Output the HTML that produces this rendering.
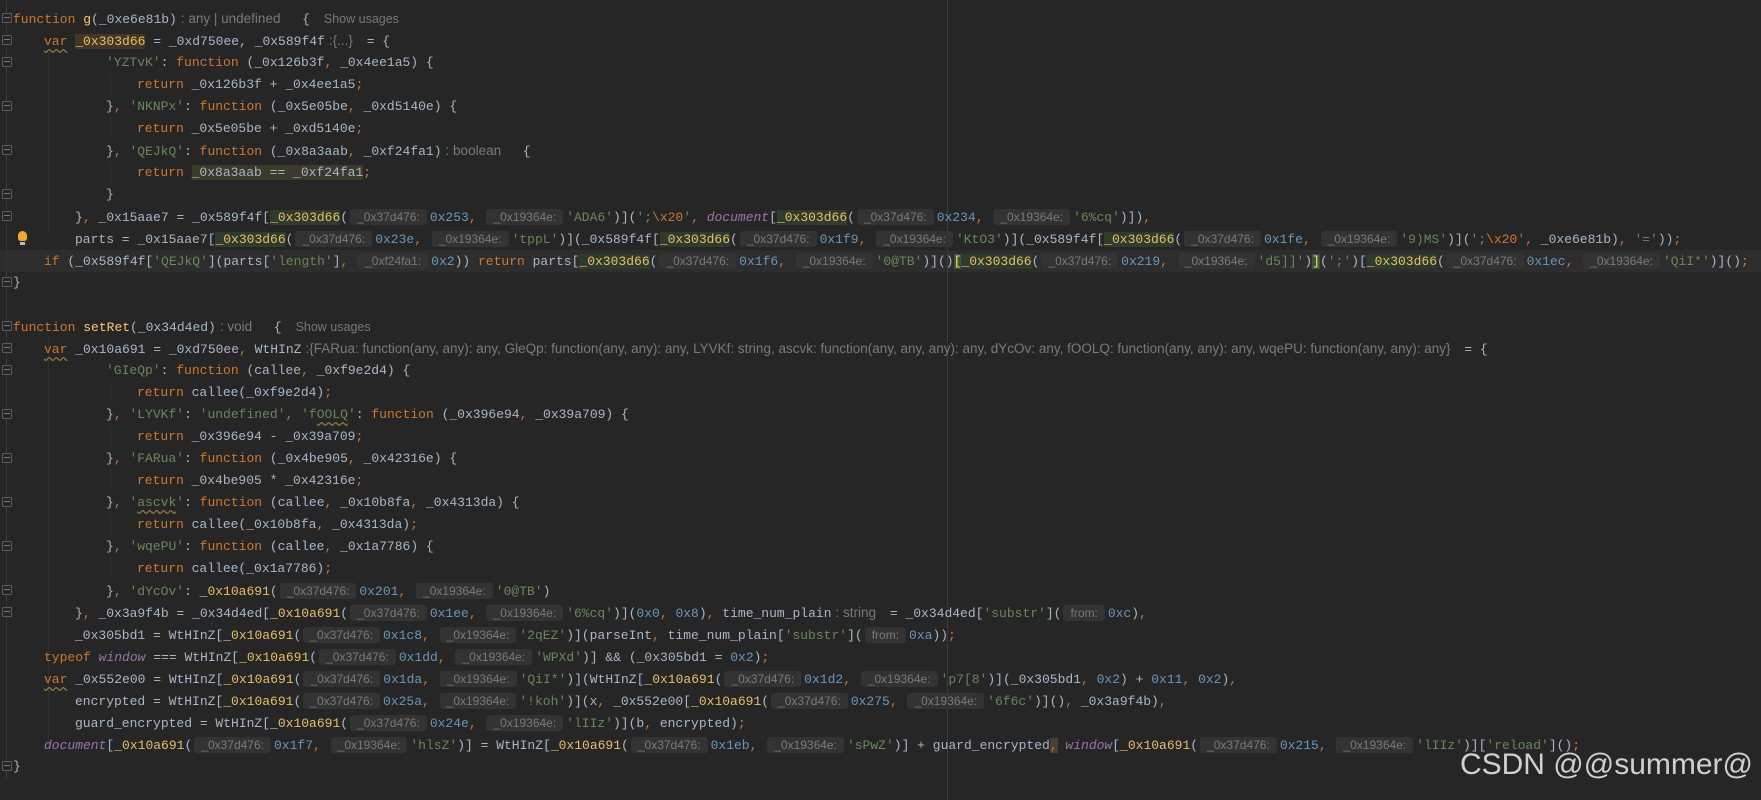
<!DOCTYPE html>
<html><head><meta charset="utf-8">
<style>
html,body{margin:0;padding:0;}
body{width:1761px;height:800px;background:#262626;position:relative;overflow:hidden;font-family:"Liberation Mono",monospace;font-size:13px;color:#a9b7c6;}
.l{position:absolute;left:0;height:22px;line-height:22px;white-space:pre;}
.k{color:#cc7832}
.fn{color:#ffc66d}
.s{color:#6a8759}
.n{color:#6897bb}
.e{color:#cc7832}
.p{color:#9876aa;font-style:italic}
.c{color:#e8bf6a}
.u{color:#e8bf6a;background:#2f3b2c}
.w{color:#e8bf6a;background:#443625}
.h{font-family:"Liberation Sans",sans-serif;font-size:12px;color:#7a7a7a;background:#333333;border-radius:3px;padding:1px 7px;margin:0 3px 0 2px;}
.t{font-family:"Liberation Sans",sans-serif;font-size:13.5px;color:#7a7a7a;margin:0 6px 0 4px;}
.su{font-family:"Liberation Sans",sans-serif;font-size:12.5px;color:#787878;margin-left:14px;}
.hl{background:#3b3a2b}
.wv{text-decoration:underline wavy #8a7a40;text-underline-offset:3px}
.cur{position:absolute;left:0;width:1761px;height:22px;background:#2d2d2d;}
.mg{position:absolute;left:947px;top:0;width:1px;height:800px;background:#3c3c3c;}
.gut{position:absolute;left:6px;top:0;width:1px;height:780px;background:#353535;}
.fold{position:absolute;left:2px;width:8px;height:8px;border:1px solid #5a5a5a;border-radius:1px;background:#262626;}
.fold:after{content:"";position:absolute;left:1px;top:3px;width:6px;height:1px;background:#777;}
.ig{position:absolute;width:1px;background:#303030;}
.wm{position:absolute;right:8px;top:748px;font-family:"Liberation Sans",sans-serif;font-size:30px;color:#d0d0d0;}
.bulb{position:absolute;left:18px;top:231px;width:9px;height:10px;border-radius:5px 5px 3px 3px;background:#f0a732;}
.bulb:after{content:"";position:absolute;left:2px;top:11px;width:5px;height:3px;background:#bbb;}
</style></head><body>
<div class="cur" style="top:250px"></div>
<div class="mg"></div>
<div class="gut"></div>
<div class="ig" style="left:48px;top:52px;height:180px"></div>
<div class="ig" style="left:110px;top:74px;height:22px"></div>
<div class="ig" style="left:110px;top:118px;height:22px"></div>
<div class="ig" style="left:110px;top:162px;height:22px"></div>
<div class="ig" style="left:48px;top:338px;height:410px"></div>
<div class="ig" style="left:110px;top:382px;height:22px"></div>
<div class="ig" style="left:110px;top:426px;height:22px"></div>
<div class="ig" style="left:110px;top:470px;height:22px"></div>
<div class="ig" style="left:110px;top:514px;height:22px"></div>
<div class="ig" style="left:110px;top:558px;height:22px"></div>
<div class="fold" style="top:13px"></div>
<div class="fold" style="top:35px"></div>
<div class="fold" style="top:57px"></div>
<div class="fold" style="top:101px"></div>
<div class="fold" style="top:145px"></div>
<div class="fold" style="top:189px"></div>
<div class="fold" style="top:211px"></div>
<div class="fold" style="top:277px"></div>
<div class="fold" style="top:321px"></div>
<div class="fold" style="top:343px"></div>
<div class="fold" style="top:365px"></div>
<div class="fold" style="top:409px"></div>
<div class="fold" style="top:453px"></div>
<div class="fold" style="top:497px"></div>
<div class="fold" style="top:541px"></div>
<div class="fold" style="top:585px"></div>
<div class="fold" style="top:607px"></div>
<div class="fold" style="top:761px"></div>
<div class="bulb"></div>

<div class="l" style="top:8px;left:13px"><span class="k">function</span> <span class="fn">g</span>(_0xe6e81b)<span class="t">: any | undefined</span>  {<span class="su">Show usages</span></div>
<div class="l" style="top:30px;left:44px"><span class="k wv">var</span> <span class="w">_0x303d66</span> = _0xd750ee, _0x589f4f<span class="t">:{...}</span> = {</div>
<div class="l" style="top:52px;left:106px"><span class="s">'YZTvK'</span>: <span class="k">function</span> (_0x126b3f<span class="k">,</span> _0x4ee1a5) {</div>
<div class="l" style="top:74px;left:137px"><span class="k">return</span> _0x126b3f + _0x4ee1a5<span class="k">;</span></div>
<div class="l" style="top:96px;left:106px">}<span class="k">,</span> <span class="s">'NKNPx'</span>: <span class="k">function</span> (_0x5e05be<span class="k">,</span> _0xd5140e) {</div>
<div class="l" style="top:118px;left:137px"><span class="k">return</span> _0x5e05be + _0xd5140e<span class="k">;</span></div>
<div class="l" style="top:140px;left:106px">}<span class="k">,</span> <span class="s">'QEJkQ'</span>: <span class="k">function</span> (_0x8a3aab<span class="k">,</span> _0xf24fa1)<span class="t">: boolean</span>  {</div>
<div class="l" style="top:162px;left:137px"><span class="k">return</span> <span class="hl">_0x8a3aab == _0xf24fa1</span><span class="k">;</span></div>
<div class="l" style="top:184px;left:106px">}</div>
<div class="l" style="top:206px;left:75px">}<span class="k">,</span> _0x15aae7 = _0x589f4f[<span class="u">_0x303d66</span>(<span class="h">_0x37d476:</span><span class="n">0x253</span><span class="k">,</span> <span class="h">_0x19364e:</span><span class="s">'ADA6'</span>)](<span class="s">';</span><span class="e">\x20</span><span class="s">'</span><span class="k">,</span> <span class="p">document</span>[<span class="u">_0x303d66</span>(<span class="h">_0x37d476:</span><span class="n">0x234</span><span class="k">,</span> <span class="h">_0x19364e:</span><span class="s">'6%cq'</span>)])<span class="k">,</span></div>
<div class="l" style="top:228px;left:75px">parts = _0x15aae7[<span class="u">_0x303d66</span>(<span class="h">_0x37d476:</span><span class="n">0x23e</span><span class="k">,</span> <span class="h">_0x19364e:</span><span class="s">'tppL'</span>)](_0x589f4f[<span class="u">_0x303d66</span>(<span class="h">_0x37d476:</span><span class="n">0x1f9</span><span class="k">,</span> <span class="h">_0x19364e:</span><span class="s">'KtO3'</span>)](_0x589f4f[<span class="u">_0x303d66</span>(<span class="h">_0x37d476:</span><span class="n">0x1fe</span><span class="k">,</span> <span class="h">_0x19364e:</span><span class="s">'9)MS'</span>)](<span class="s">';</span><span class="e">\x20</span><span class="s">'</span><span class="k">,</span> _0xe6e81b)<span class="k">,</span> <span class="s">'='</span>))<span class="k">;</span></div>
<div class="l" style="top:250px;left:44px"><span class="k">if</span> (_0x589f4f[<span class="s">'QEJkQ'</span>](parts[<span class="s">'length'</span>]<span class="k">,</span> <span class="h">_0xf24fa1:</span><span class="n">0x2</span>)) <span class="k">return</span> parts[<span class="u">_0x303d66</span>(<span class="h">_0x37d476:</span><span class="n">0x1f6</span><span class="k">,</span> <span class="h">_0x19364e:</span><span class="s">'0@TB'</span>)]()<span style="background:#3b514d;color:#ffef28">[</span><span class="u">_0x303d66</span>(<span class="h">_0x37d476:</span><span class="n">0x219</span><span class="k">,</span> <span class="h">_0x19364e:</span><span class="s">'d5]]'</span>)<span style="background:#3b514d;color:#ffef28">]</span>(<span class="s">';'</span>)[<span class="u">_0x303d66</span>(<span class="h">_0x37d476:</span><span class="n">0x1ec</span><span class="k">,</span> <span class="h">_0x19364e:</span><span class="s">'QiI*'</span>)]()<span class="k">;</span></div>
<div class="l" style="top:272px;left:13px">}</div>

<div class="l" style="top:316px;left:13px"><span class="k">function</span> <span class="fn">setRet</span>(_0x34d4ed)<span class="t">: void</span>  {<span class="su">Show usages</span></div>
<div class="l" style="top:338px;left:44px"><span class="k wv">var</span> _0x10a691 = _0xd750ee<span class="k">,</span> WtHInZ<span class="t">:{FARua: function(any, any): any, GleQp: function(any, any): any, LYVKf: string, ascvk: function(any, any, any): any, dYcOv: any, fOOLQ: function(any, any): any, wqePU: function(any, any): any}</span> = {</div>
<div class="l" style="top:360px;left:106px"><span class="s">'GIeQp'</span>: <span class="k">function</span> (callee<span class="k">,</span> _0xf9e2d4) {</div>
<div class="l" style="top:382px;left:137px"><span class="k">return</span> callee(_0xf9e2d4)<span class="k">;</span></div>
<div class="l" style="top:404px;left:106px">}<span class="k">,</span> <span class="s">'LYVKf'</span>: <span class="s">'undefined'</span><span class="k">,</span> <span class="s">'f<span class="wv">OOLQ</span>'</span>: <span class="k">function</span> (_0x396e94<span class="k">,</span> _0x39a709) {</div>
<div class="l" style="top:426px;left:137px"><span class="k">return</span> _0x396e94 - _0x39a709<span class="k">;</span></div>
<div class="l" style="top:448px;left:106px">}<span class="k">,</span> <span class="s">'FARua'</span>: <span class="k">function</span> (_0x4be905<span class="k">,</span> _0x42316e) {</div>
<div class="l" style="top:470px;left:137px"><span class="k">return</span> _0x4be905 * _0x42316e<span class="k">;</span></div>
<div class="l" style="top:492px;left:106px">}<span class="k">,</span> <span class="s">'<span class="wv">ascvk</span>'</span>: <span class="k">function</span> (callee<span class="k">,</span> _0x10b8fa<span class="k">,</span> _0x4313da) {</div>
<div class="l" style="top:514px;left:137px"><span class="k">return</span> callee(_0x10b8fa<span class="k">,</span> _0x4313da)<span class="k">;</span></div>
<div class="l" style="top:536px;left:106px">}<span class="k">,</span> <span class="s">'wqePU'</span>: <span class="k">function</span> (callee<span class="k">,</span> _0x1a7786) {</div>
<div class="l" style="top:558px;left:137px"><span class="k">return</span> callee(_0x1a7786)<span class="k">;</span></div>
<div class="l" style="top:580px;left:106px">}<span class="k">,</span> <span class="s">'dYcOv'</span>: <span class="c">_0x10a691</span>(<span class="h">_0x37d476:</span><span class="n">0x201</span><span class="k">,</span> <span class="h">_0x19364e:</span><span class="s">'0@TB'</span>)</div>
<div class="l" style="top:602px;left:75px">}<span class="k">,</span> _0x3a9f4b = _0x34d4ed[<span class="c">_0x10a691</span>(<span class="h">_0x37d476:</span><span class="n">0x1ee</span><span class="k">,</span> <span class="h">_0x19364e:</span><span class="s">'6%cq'</span>)](<span class="n">0x0</span><span class="k">,</span> <span class="n">0x8</span>)<span class="k">,</span> time_num_plain<span class="t">: string</span> = _0x34d4ed[<span class="s">'substr'</span>](<span class="h">from:</span><span class="n">0xc</span>)<span class="k">,</span></div>
<div class="l" style="top:624px;left:75px">_0x305bd1 = WtHInZ[<span class="c">_0x10a691</span>(<span class="h">_0x37d476:</span><span class="n">0x1c8</span><span class="k">,</span> <span class="h">_0x19364e:</span><span class="s">'2qEZ'</span>)](parseInt<span class="k">,</span> time_num_plain[<span class="s">'substr'</span>](<span class="h">from:</span><span class="n">0xa</span>))<span class="k">;</span></div>
<div class="l" style="top:646px;left:44px"><span class="k">typeof</span> <span class="p">window</span> === WtHInZ[<span class="c">_0x10a691</span>(<span class="h">_0x37d476:</span><span class="n">0x1dd</span><span class="k">,</span> <span class="h">_0x19364e:</span><span class="s">'WPXd'</span>)] &amp;&amp; (_0x305bd1 = <span class="n">0x2</span>)<span class="k">;</span></div>
<div class="l" style="top:668px;left:44px"><span class="k wv">var</span> _0x552e00 = WtHInZ[<span class="c">_0x10a691</span>(<span class="h">_0x37d476:</span><span class="n">0x1da</span><span class="k">,</span> <span class="h">_0x19364e:</span><span class="s">'QiI*'</span>)](WtHInZ[<span class="c">_0x10a691</span>(<span class="h">_0x37d476:</span><span class="n">0x1d2</span><span class="k">,</span> <span class="h">_0x19364e:</span><span class="s">'p7[8'</span>)](_0x305bd1<span class="k">,</span> <span class="n">0x2</span>) + <span class="n">0x11</span><span class="k">,</span> <span class="n">0x2</span>)<span class="k">,</span></div>
<div class="l" style="top:690px;left:75px">encrypted = WtHInZ[<span class="c">_0x10a691</span>(<span class="h">_0x37d476:</span><span class="n">0x25a</span><span class="k">,</span> <span class="h">_0x19364e:</span><span class="s">'!koh'</span>)](x<span class="k">,</span> _0x552e00[<span class="c">_0x10a691</span>(<span class="h">_0x37d476:</span><span class="n">0x275</span><span class="k">,</span> <span class="h">_0x19364e:</span><span class="s">'6f6c'</span>)]()<span class="k">,</span> _0x3a9f4b)<span class="k">,</span></div>
<div class="l" style="top:712px;left:75px">guard_encrypted = WtHInZ[<span class="c">_0x10a691</span>(<span class="h">_0x37d476:</span><span class="n">0x24e</span><span class="k">,</span> <span class="h">_0x19364e:</span><span class="s">'lIIz'</span>)](b<span class="k">,</span> encrypted)<span class="k">;</span></div>
<div class="l" style="top:734px;left:44px"><span class="p">document</span>[<span class="c">_0x10a691</span>(<span class="h">_0x37d476:</span><span class="n">0x1f7</span><span class="k">,</span> <span class="h">_0x19364e:</span><span class="s">'hlsZ'</span>)] = WtHInZ[<span class="c">_0x10a691</span>(<span class="h">_0x37d476:</span><span class="n">0x1eb</span><span class="k">,</span> <span class="h">_0x19364e:</span><span class="s">'sPwZ'</span>)] + guard_encrypted<span class="k" style="background:#4a4030">,</span> <span class="p">window</span>[<span class="c">_0x10a691</span>(<span class="h">_0x37d476:</span><span class="n">0x215</span><span class="k">,</span> <span class="h">_0x19364e:</span><span class="s">'lIIz'</span>)][<span class="s">'reload'</span>]()<span class="k">;</span></div>
<div class="l" style="top:756px;left:13px">}</div>

<div class="wm">CSDN @@summer@</div>
</body></html>
